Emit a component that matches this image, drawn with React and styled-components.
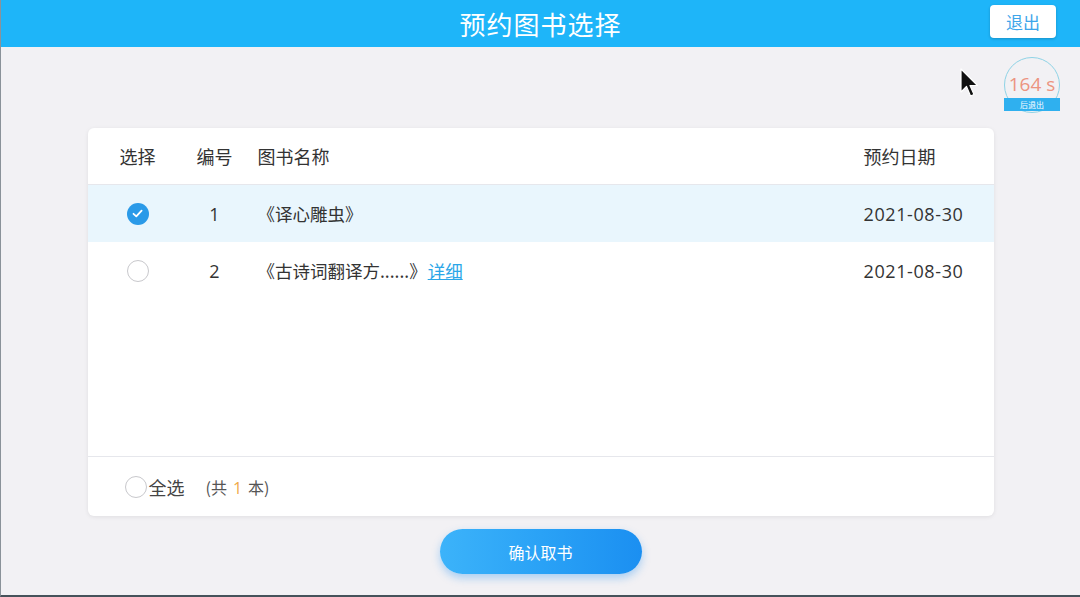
import React from "react";
import styled, { createGlobalStyle } from "styled-components";

const Global = createGlobalStyle`
  html, body { margin: 0; padding: 0; }
  body {
    font-family: "Noto Sans CJK SC", "Noto Sans", sans-serif;
    background: #f2f1f4;
    color: #333;
  }
`;

const Page = styled.div`
  position: relative;
  width: 1080px;
  height: 597px;
  box-sizing: border-box;
  border-bottom: 2px solid #46525a;
  border-left: 1px solid #8a9299;
  background: #f2f1f4;
  display: flex;
  flex-direction: column;
  align-items: center;
  overflow: hidden;
`;

const Header = styled.header`
  width: 100%;
  height: 47px;
  background: #1eb5f9;
  display: flex;
  align-items: center;
  justify-content: center;
  position: relative;
  flex-shrink: 0;
`;

const Title = styled.h1`
  margin: 0;
  font-size: 26px;
  font-weight: 400;
  color: #fff;
  letter-spacing: 1px;
`;

const ExitButton = styled.button`
  position: absolute;
  right: 24px;
  top: 5px;
  width: 66px;
  height: 33px;
  border: none;
  border-radius: 4px;
  background: #fff;
  color: #3ea6ea;
  font-family: inherit;
  font-size: 17px;
  box-shadow: 0 1px 3px rgba(0, 0, 0, 0.2);
  padding: 0;
`;

const Timer = styled.div`
  position: absolute;
  left: 1002px;
  top: 57px;
  width: 58px;
  height: 56px;
`;

const TimerRing = styled.div`
  position: absolute;
  left: 1px;
  top: 0;
  width: 56px;
  height: 56px;
  border-radius: 50%;
  border: 1.5px solid #8fd3e6;
  box-sizing: border-box;
`;

const TimerText = styled.div`
  position: absolute;
  left: 0;
  right: 0;
  top: 15px;
  text-align: center;
  font-size: 19px;
  line-height: 24px;
  color: #ec9480;
  font-family: "Open Sans", "Noto Sans", sans-serif;
`;

const TimerBar = styled.div`
  position: absolute;
  left: 1px;
  right: 1px;
  top: 41px;
  height: 13px;
  background: #2fb0ef;
  color: #fff;
  font-size: 8px;
  line-height: 13px;
  text-align: center;
`;

const Cursor = styled.svg`
  position: absolute;
  left: 958px;
  top: 68px;
`;

const Card = styled.section`
  margin-top: 81px;
  width: 906px;
  height: 388px;
  background: #fff;
  border-radius: 6px;
  box-shadow: 0 1px 4px rgba(0, 0, 0, 0.08);
  display: flex;
  flex-direction: column;
  overflow: hidden;
`;

const Row = styled.div`
  display: grid;
  grid-template-columns: 100px 54px 1fr 130px;
  align-items: center;
  height: ${(p) => (p.$head ? 56 : 57)}px;
  background: ${(p) => (p.$active ? "#e9f6fd" : "transparent")};
  border-bottom: ${(p) => (p.$head ? "1px solid #e6e7ec" : "none")};
  font-size: ${(p) => (p.$head ? 18 : 17.5)}px;
  color: #333;
`;

const Cell = styled.div`
  padding-left: ${(p) => p.$pl || 0}px;
  display: flex;
  justify-content: ${(p) => (p.$align === "center" ? "center" : "flex-start")};
  align-items: center;
  white-space: nowrap;
`;

const DateText = styled.span`
  font-family: "Open Sans", "Noto Sans", sans-serif;
  font-size: 18px;
  letter-spacing: 0.6px;
  color: #333;
`;

const Num = styled.span`
  font-family: "Open Sans", "Noto Sans", sans-serif;
  font-size: 18px;
`;

const Radio = styled.span`
  width: 22px;
  height: 22px;
  border-radius: 50%;
  box-sizing: border-box;
  border: ${(p) => (p.$checked ? "none" : "1.5px solid #c8c8cc")};
  background: ${(p) => (p.$checked ? "#2a9ae8" : "#fff")};
  display: inline-flex;
  align-items: center;
  justify-content: center;
  margin-right: ${(p) => p.$mr || 0}px;
  flex-shrink: 0;
`;

const Detail = styled.a`
  color: #2aa6e8;
  text-decoration: underline;
  margin-left: 1px;
`;

const Body = styled.div`
  flex: 1;
`;

const Footer = styled.div`
  height: 59px;
  border-top: 1px solid #e6e7ec;
  display: flex;
  align-items: center;
  padding-left: 37px;
  font-size: 18px;
  color: #444;
`;

const Count = styled.span`
  margin-left: 21px;
  font-size: 16px;
  color: #555;
`;

const Orange = styled.span`
  color: #f0a94a;
  margin: 0 6px;
  font-family: "Open Sans", "Noto Sans", sans-serif;
`;

const Confirm = styled.button`
  margin-top: 13px;
  width: 202px;
  height: 45px;
  border: none;
  border-radius: 23px;
  background: linear-gradient(90deg, #3cb3fa 0%, #2aa2f6 50%, #1b8ff1 100%);
  box-shadow: 0 4px 8px rgba(30, 140, 240, 0.35);
  color: #fff;
  font-family: inherit;
  font-size: 16px;
  padding: 0;
`;

const Check = () => (
  <svg width="13" height="13" viewBox="0 0 13 13">
    <path d="M2.5 6.8 L5.3 9.4 L10.6 3.6" fill="none" stroke="#fff" strokeWidth="1.8" strokeLinecap="round" strokeLinejoin="round" />
  </svg>
);

const books = [
  { id: 1, name: "《译心雕虫》", date: "2021-08-30", checked: true },
  { id: 2, name: "《古诗词翻译方......》", date: "2021-08-30", checked: false, detail: true },
];

export default function App() {
  return (
    <>
      <Global />
      <Page>
        <Header>
          <Title>预约图书选择</Title>
          <ExitButton>退出</ExitButton>
        </Header>
        <Timer>
          <TimerRing />
          <TimerText>164 s</TimerText>
          <TimerBar>后退出</TimerBar>
        </Timer>
        <Cursor width="22" height="32" viewBox="0 0 22 32">
          <path d="M2 1 L2 24 L7.5 18.5 L11.5 28 L15 26.5 L11 17.5 L18.5 17.5 Z" fill="#111" stroke="#fff" strokeWidth="1.2" strokeLinejoin="round" />
        </Cursor>
        <Card>
          <Row $head>
            <Cell $align="center">选择</Cell>
            <Cell $align="center">编号</Cell>
            <Cell $pl={16}>图书名称</Cell>
            <Cell>预约日期</Cell>
          </Row>
          <Body>
            {books.map((b) => (
              <Row key={b.id} $active={b.checked}>
                <Cell $align="center">
                  <Radio $checked={b.checked}>{b.checked && <Check />}</Radio>
                </Cell>
                <Cell $align="center">
                  <Num>{b.id}</Num>
                </Cell>
                <Cell $pl={16}>
                  {b.name}
                  {b.detail && <Detail>详细</Detail>}
                </Cell>
                <Cell>
                  <DateText>{b.date}</DateText>
                </Cell>
              </Row>
            ))}
          </Body>
          <Footer>
            <Radio $mr={2} />
            全选
            <Count>
              (共<Orange>1</Orange>本)
            </Count>
          </Footer>
        </Card>
        <Confirm>确认取书</Confirm>
      </Page>
    </>
  );
}
